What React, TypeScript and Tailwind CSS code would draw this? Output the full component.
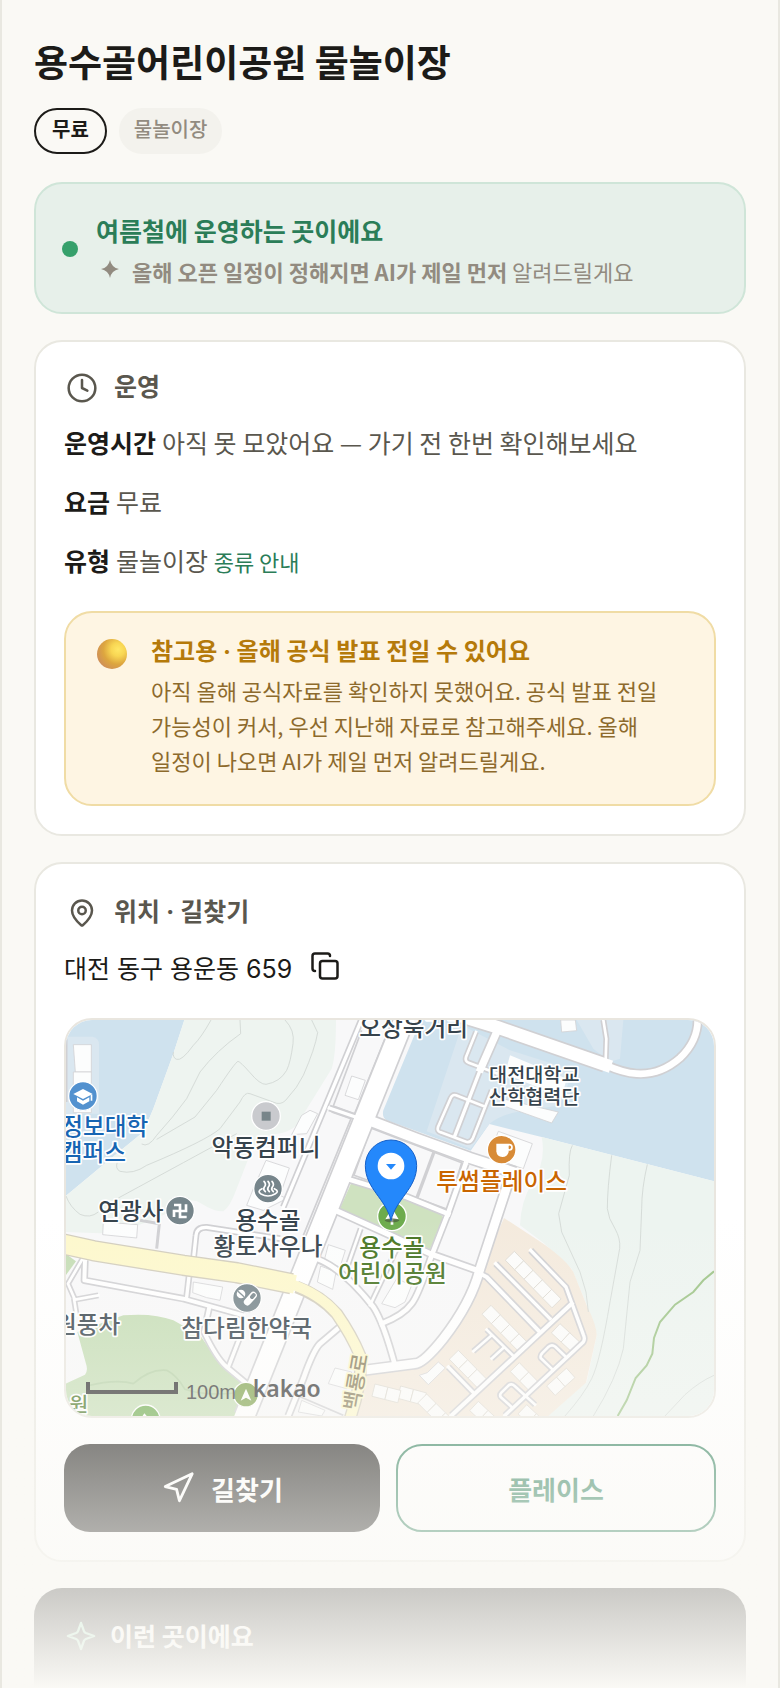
import type { ReactNode } from "react";
import { Clock, Copy, MapPin, Navigation } from "lucide-react";

const INK = "#36434c";

function Card({ children }: { children: ReactNode }) {
  return (
    <section className="rounded-[28px] border-2 border-[#e9e8e1] bg-white px-7 pt-6 pb-7">{children}</section>
  );
}

function CardHeading({ icon, children }: { icon: ReactNode; children: ReactNode }) {
  return (
    <h2 className="flex h-11 items-center gap-4 px-0.5 font-['Inter','Noto_Sans_CJK_KR',sans-serif] text-[25px] font-bold text-[#5a574e]">
      {icon}
      {children}
    </h2>
  );
}

function Sparkle({ className, filled = false }: { className: string; filled?: boolean }) {
  return (
    <svg
      viewBox="0 0 24 24"
      className={className}
      fill={filled ? "currentColor" : "none"}
      stroke="currentColor"
      strokeWidth={filled ? 0 : 1.8}
      strokeLinejoin="round"
      aria-hidden="true"
    >
      {filled ? (
        <path d="M12 0 Q14 10 24 12 Q14 14 12 24 Q10 14 0 12 Q10 10 12 0Z" />
      ) : (
        <path d="M12 1.5 L14.4 8.2 Q14.9 9.2 15.9 9.6 L22.5 12 L15.9 14.4 Q14.9 14.8 14.4 15.8 L12 22.5 L9.6 15.8 Q9.1 14.8 8.1 14.4 L1.5 12 L8.1 9.6 Q9.1 9.2 9.6 8.2Z" />
      )}
    </svg>
  );
}

const roads: { d: string; w: number }[] = [
  { d: "M1062 54 L584 1242", w: 58 },
  { d: "M934 54 L700 615", w: 10 },
  { d: "M838 318 L925 348", w: 10 },
  { d: "M950 352 L1100 410 L1260 468 L1395 512", w: 30 },
  { d: "M1220 38 L1340 75 L1665 188", w: 38 },
  { d: "M1665 188 Q1720 213 1760 215 Q1830 220 1890 168 Q1943 118 1943 54", w: 20 },
  { d: "M1660 54 L1669 110 L1667 175", w: 8 },
  { d: "M1338 95 L1292 200", w: 22 },
  { d: "M1292 200 L1215 400", w: 10 },
  { d: "M1278 90 L1248 165 Q1244 178 1256 182 L1340 214", w: 8 },
  { d: "M1300 312 L1218 280 Q1208 276 1202 288 L1164 375 Q1160 388 1172 391 L1250 420 Q1262 422 1268 410 L1325 265", w: 8 },
  { d: "M890 530 L1070 585 L1195 636", w: 14 },
  { d: "M845 620 L1000 690 L1140 755 L1290 808", w: 16 },
  { d: "M1247 485 L1195 632 L1145 760 Q1105 880 1085 905 Q1060 940 995 965", w: 14 },
  { d: "M1385 510 L1290 800 Q1265 900 1180 1010 Q1120 1085 1095 1085 L940 1105", w: 26 },
  { d: "M932 680 L890 800", w: 8 },
  { d: "M1050 720 L960 910", w: 8 },
  { d: "M800 770 Q880 800 970 915 Q1000 960 1035 1090", w: 14 },
  { d: "M875 970 L810 1025 Q790 1045 760 1130 L715 1242", w: 14 },
  { d: "M105 775 L103 835 L400 890 L580 940", w: 12 },
  { d: "M98 770 L54 845 L75 893 L145 880", w: 8 },
  { d: "M72 890 L80 940", w: 8 },
  { d: "M418 815 L410 885", w: 10 },
  { d: "M478 915 L462 990 Q500 1070 530 1095 L590 1145", w: 12 },
  { d: "M568 1010 L535 1095", w: 10 },
  { d: "M430 775 L438 700 Q440 675 470 676 L690 710", w: 10 },
  { d: "M1205 1240 L1565 905", w: 12 },
  { d: "M1365 1240 L1600 1020 Q1606 1010 1600 998 L1548 855 L1442 745", w: 10 },
  { d: "M1285 812 L1310 825 L1465 985", w: 12 },
  { d: "M1337 785 L1500 950", w: 10 },
  { d: "M1195 1095 L1270 1172", w: 10 },
  { d: "M1310 983 L1390 1062 M1325 1000 L1270 1048 M1325 1070 L1360 1038", w: 8 },
  { d: "M1505 1100 L1472 1068 Q1470 1060 1478 1052 L1496 1034 Q1506 1026 1516 1034 L1545 1062", w: 8 },
  { d: "M1385 1215 L1352 1185 Q1348 1178 1354 1172 L1376 1150 Q1385 1144 1394 1152 L1455 1208", w: 8 },
];

const homes = [
  { x: 1393, y: 748, n: 5, r: 45.5 },
  { x: 1323, y: 910, n: 4, r: 45.5 },
  { x: 1225, y: 1045, n: 3, r: 45.5 },
  { x: 1530, y: 965, n: 2, r: 43 },
  { x: 1408, y: 1082, n: 2, r: 45.5 },
  { x: 1490, y: 1152, n: 2, r: -42 },
  { x: 1285, y: 1198, n: 2, r: 43 },
  { x: 1430, y: 1208, n: 2, r: 43 },
  { x: 1052, y: 1152, n: 2, r: 15 },
  { x: 1130, y: 1176, n: 3, r: 45 },
  { x: 975, y: 1146, n: 2, r: 14 },
];

const labels = [
  { t: "오상욱거리", x: 1091, y: 102, s: 71, c: INK },
  { t: "대전대학교", x: 1453, y: 241, s: 59, c: INK },
  { t: "산학협력단", x: 1453, y: 307, s: 59, c: INK },
  { t: "투썸플레이스", x: 1355, y: 564, s: 71, c: "#c96500" },
  { t: "정보대학", x: 164, y: 400, s: 71, c: "#1765b3" },
  { t: "캠퍼스", x: 130, y: 478, s: 71, c: "#1765b3" },
  { t: "악동컴퍼니", x: 648, y: 462, s: 71, c: INK },
  { t: "연광사", x: 243, y: 654, s: 71, c: INK },
  { t: "용수골", x: 654, y: 680, s: 71, c: INK },
  { t: "황토사우나", x: 654, y: 758, s: 71, c: INK },
  { t: "용수골", x: 1026, y: 761, s: 71, c: "#477422" },
  { t: "어린이공원", x: 1027, y: 839, s: 71, c: "#477422" },
  { t: "참다림한약국", x: 590, y: 1006, s: 71, c: INK },
  { t: "원풍차", x: 113, y: 994, s: 71, c: INK },
  { t: "원", x: 86, y: 1230, s: 62, c: "#477422" },
];

function MapView() {
  return (
    <svg
      viewBox="48 54 1944 1188"
      preserveAspectRatio="xMidYMid slice"
      className="block h-[396px] w-full"
      role="img"
      aria-label="용수골어린이공원 지도"
    >
      <rect x="0" y="0" width="2100" height="1300" fill="#f8f8f9" />
      {/* campus and hills */}
      <path d="M40 54 H403 L370 155 L310 320 L280 390 L200 455 L40 588Z" fill="#cfe2ee" />
      <path d="M403 54 H858 Q858 160 845 200 L740 370 Q720 390 680 396 Q630 405 605 445 L560 560 Q540 615 520 628 Q490 628 455 605 Q420 580 380 620 Q240 690 150 694 L40 690 V588 L200 455 L280 390 L310 320 L370 155Z" fill="#eef4f0" />
      <path d="M40 104 H128 Q147 108 147 128 V335 H40Z" fill="#dae7f0" />
      <path d="M1112 54 H1992 V538 L1475 405 L1318 366 L1262 446 L1010 355 Q995 345 1000 325Z" fill="#cfe2ee" />
      <path d="M1236 70 L1380 145 L1570 205 L1530 310 L1400 330 Q1350 340 1318 366 L1262 440 L1130 388Z" fill="#dae7f0" />
      <path d="M1580 54 H1720 L1710 170 L1680 180 L1630 140Z" fill="#dae7f0" />
      <path d="M1475 405 L1992 538 V1242 H1490 L1610 1140 L1640 1000 L1615 920 L1565 800 L1480 722 L1410 670 Q1412 600 1445 545 Q1490 480 1475 405Z" fill="#edf4f0" />
      <path d="M1362 648 L1480 725 Q1550 775 1570 810 L1610 910 Q1640 970 1640 1000 L1608 1142 L1495 1242 H890 L940 1105 L1110 1085 L1260 880Z" fill="#f4eadd" />
      <path d="M905 540 L1080 595 L1170 635 Q1184 645 1180 660 L1140 742 L865 630Z" fill="#cfe2c0" />
      <path d="M40 1148 L105 1118 Q115 1105 108 1085 L82 990 L220 940 Q310 932 370 955 L450 1000 L515 1092 L585 1145 L560 1242 H40Z" fill="#c5ddb5" />
      <path d="M40 750 L78 778 L40 830Z" fill="#c5ddb5" />
      {/* contour lines */}
      <g fill="none" stroke="#d0d6d2" strokeWidth="2.5">
        <path d="M483 54 Q455 105 430 130 Q395 178 380 172 Q368 168 370 150" />
        <path d="M570 54 L572 95 Q500 145 450 210 L410 290 Q370 345 320 400 Q295 438 275 426" />
        <path d="M705 54 Q735 85 729 125 Q722 180 710 205 Q690 240 648 247 Q630 248 600 212 Q572 180 564 178 Q556 180 500 265 L435 345 L320 412" />
        <path d="M785 54 L803 92 Q795 140 760 220 Q740 260 715 285 Q700 308 680 304 L600 275 Q585 268 570 300 L510 380 Q470 415 290 490 Q250 518 210 508 Q195 500 202 480" />
        <path d="M560 395 L400 482 L205 588" />
        <path d="M48 582 Q60 615 90 637 Q120 650 145 630" />
        <path d="M1567 430 Q1555 450 1558 520 L1526 635 L1535 690 L1590 810 L1608 870 L1615 930" />
        <path d="M1685 460 Q1672 560 1672 620 Q1675 650 1695 680 Q1712 710 1709 740 L1680 900 Q1650 1080 1625 1130 Q1600 1180 1545 1242" />
        <path d="M1792 487 Q1775 560 1775 620 L1770 745 L1740 840 L1720 1040 Q1700 1130 1630 1242" />
        <path d="M1992 1120 Q1950 1138 1905 1178 L1845 1242" />
      </g>
      <path d="M110 1152 Q200 1130 250 1145 Q300 1100 350 1105 Q380 1120 405 1162 Q470 1185 580 1170" fill="none" stroke="#b5d0a6" strokeWidth="5" />
      <path d="M1992 808 L1960 835 L1930 870 L1875 908 L1830 960 L1812 1008 L1807 1055 L1790 1090 L1757 1128 L1730 1195 L1703 1242" fill="none" stroke="#9cc386" strokeWidth="6" />
      {/* blocks and buildings */}
      <g fill="none" stroke="#d0d0d3" strokeWidth="5" strokeLinejoin="round">
        <path d="M935 85 L850 312 L914 335 L1005 110" />
        <path d="M845 330 L903 350 L760 700" />
        <path d="M962 378 L1235 482 L1192 622 L912 520Z" />
        <path d="M1152 450 L1100 590" strokeWidth="10" />
        <path d="M50 112 V300" />
        <path d="M270 655 L328 665 L320 740" strokeWidth="9" />
        <path d="M740 1180 L880 1240" />
      </g>
      <g fill="#fcfdfd" stroke="#d3d3d5" strokeWidth="2.5">
        <path d="M70 128 H124 V210 H76Z" />
        <path d="M70 210 H124 V332 H70Z" />
        <path d="M905 222 L946 235 L925 293 L885 280Z" />
        <path d="M780 325 L803 335 L770 395 L725 398 L755 340Z" />
        <path d="M648 475 L718 498 L690 580 L610 560Z" />
        <path d="M610 560 L590 610 L640 625 L710 590 L680 575Z" />
        <path d="M160 660 L263 668 L260 708 L158 698Z" />
        <path d="M430 840 L518 855 L510 895 Q470 890 428 872Z" />
        <path d="M835 728 L886 745 L870 795 L822 778Z" />
        <path d="M812 792 L858 810 L848 862 L802 840Z" />
        <path d="M1040 830 L1085 850 L1065 900 L1035 917 L995 905Z" />
        <path d="M855 1098 L905 1110 L890 1160 L835 1145Z" />
        <path d="M755 1195 L825 1225 L815 1242 L745 1230Z" />
        <path d="M1380 160 L1550 230 L1535 285 L1365 215Z" stroke="none" />
        <path d="M1365 292 L1525 330 L1505 363 L1362 312Z" />
        <path d="M1532 54 H1576 L1580 86 L1535 90Z" />
        <path d="M1345 388 L1447 425 L1420 500 L1315 465Z" />
        <path d="M1108 1120 L1132 1112 L1165 1080 L1186 1098 L1135 1148Z" />
      </g>
      {homes.map((h) => (
        <g key={`${h.x}-${h.y}`} transform={`translate(${h.x} ${h.y}) rotate(${h.r})`} fill="#fcfcfb" stroke="#dcd8d0" strokeWidth="2.5">
          {Array.from({ length: h.n }, (_, i) => (
            <rect key={i} x={i * 40} width="40" height="38" />
          ))}
        </g>
      ))}
      {/* streets */}
      <g fill="none" stroke="#d0d0d3" strokeLinejoin="round">
        {roads.map((r) => (
          <path key={r.d} d={r.d} strokeWidth={r.w + 10} />
        ))}
      </g>
      <g fill="none" stroke="#ffffff" strokeLinejoin="round">
        {roads.map((r) => (
          <path key={r.d} d={r.d} strokeWidth={r.w} strokeLinecap="square" />
        ))}
      </g>
      <g fill="none" strokeLinejoin="round">
        <path d="M30 724 L130 746 L400 790 L560 812 L725 845" stroke="#d2cdbd" strokeWidth="64" />
        <path d="M740 855 Q810 880 860 935 Q905 1000 930 1060 Q940 1130 900 1250" stroke="#d2cdbd" strokeWidth="38" />
        <path d="M30 724 L130 746 L400 790 L560 812 L735 847" stroke="#fdf8cc" strokeWidth="56" />
        <path d="M720 845 Q810 875 860 935 Q905 1000 930 1060 Q940 1130 900 1250" stroke="#fdf8cc" strokeWidth="30" />
      </g>
      {/* place markers */}
      <g stroke="#ffffff" strokeWidth="4">
        <circle cx="99" cy="282" r="43" fill="#5291cf" />
        <circle cx="648" cy="342" r="43" fill="#c9cace" />
        <circle cx="654" cy="560" r="43" fill="#76858b" />
        <circle cx="390" cy="626" r="43" fill="#76858b" />
        <circle cx="1355" cy="443" r="43" fill="#d88b37" />
        <circle cx="1026" cy="643" r="43" fill="#6dab4d" />
        <circle cx="591" cy="888" r="43" fill="#76858b" />
        <circle cx="588" cy="1178" r="37" fill="#7fa24d" />
        <circle cx="287" cy="1252" r="43" fill="#6dab4d" />
      </g>
      <g fill="#ffffff">
        <path d="M99 261 L128 276 L99 291 L70 276Z" />
        <path d="M81 286 L99 296 L118 286 V298 L99 308 L81 298Z" />
        <path d="M122 278 H127 V296 H122Z" />
        <path d="M1339 425 H1376 V450 Q1372 465 1357 465 Q1341 465 1339 448Z" />
        <path d="M1026 618 L1046 652 H1030 V668 H1022 V652 H1006Z" />
        <path d="M588 1160 L604 1196 L588 1187 L572 1196Z" />
        <path d="M283 1234 L294 1246 H275Z" />
        <circle cx="573" cy="876" r="13" />
      </g>
      <path d="M564 868 L582 884" stroke="#76858b" strokeWidth="4" />
      <path d="M592 900 L610 880" stroke="#ffffff" strokeWidth="21" strokeLinecap="round" />
      <path d="M606 885 L611 879" stroke="#76858b" strokeWidth="12" strokeLinecap="round" />
      <circle cx="1378" cy="436" r="8" fill="none" stroke="#ffffff" strokeWidth="5" />
      <rect x="635" y="329" width="27" height="27" fill="#78858a" />
      <g fill="none" stroke="#ffffff" strokeWidth="5" strokeLinecap="round">
        <path d="M642 538 Q650 547 643 555 Q638 562 646 569 M654 538 Q662 547 655 555 Q650 562 658 569 M666 538 Q674 547 667 555 Q662 562 670 569" />
        <path d="M636 560 Q620 568 633 576 Q654 588 675 576 Q690 568 673 560" />
      </g>
      <path d="M372 609 H390 V645 H410 M372 645 V627 H408 V607" fill="none" stroke="#ffffff" strokeWidth="8" />
      {/* place names */}
      <g
        textAnchor="middle"
        fontWeight="500"
        stroke="#ffffff"
        strokeWidth="10"
        strokeLinejoin="round"
        paintOrder="stroke"
      >
        {labels.map((l) => (
          <text key={`${l.t}-${l.y}`} x={l.x} y={l.y} fontSize={l.s} fill={l.c}>
            {l.t}
          </text>
        ))}
        <text x="920" y="1140" dy="20" fontSize="62" fill="#857a58" stroke="#fdf8cc" transform="rotate(-80 920 1140)">
          백룡로
        </text>
      </g>
      {/* selected place */}
      <ellipse cx="1026" cy="655" rx="22" ry="6" fill="#44503c" opacity=".6" />
      <path d="M1023 656 C1008 590 946 560 946 491 A77 77 0 0 1 1100 491 C1100 560 1038 590 1023 656Z" fill="#2488fb" stroke="#1560c8" strokeWidth="3" />
      <circle cx="1023" cy="492" r="40" fill="#ffffff" />
      <path d="M1008 486 H1038 L1023 503Z" fill="#2488fb" />
      {/* scale */}
      <path d="M114 1140 V1170 H378 V1140" fill="none" stroke="#2c2c2c" strokeWidth="12" />
      <text x="408" y="1192" fontSize="60" fill="#333333" className="font-['Liberation_Sans',sans-serif]">100m</text>
      <text x="608" y="1184" fontSize="69" fontWeight="600" fill="#333333" className="font-['Noto_Sans',sans-serif]">kakao</text>
    </svg>
  );
}

export default function App() {
  return (
    <main className="relative h-screen overflow-hidden border-x-2 border-[#e9e8e1] bg-[#faf9f5] px-8 pt-9 font-['Noto_Sans_CJK_KR',sans-serif] text-[#1c1b18]">
      <h1 className="text-[37px] leading-[50px] font-bold">용수골어린이공원 물놀이장</h1>
      <div className="mt-[22px] flex gap-3 text-xl leading-[38px] font-medium">
        <span className="rounded-full border-2 border-[#1c1b18] px-4 pb-1 font-bold">무료</span>
        <span className="rounded-full border-2 border-[#f3f2ed] bg-[#f3f2ed] px-[13px] pb-1 text-[#928b80]">물놀이장</span>
      </div>

      <section className="mt-7 flex items-center gap-[18px] rounded-[28px] border-2 border-[#cfe5d8] bg-[#e7f0ea] px-[26px] pt-[26px] pb-6">
        <span className="size-4 shrink-0 rounded-full bg-[#36a06b]" />
        <div>
          <p className="text-[25px] leading-10 font-bold text-[#2b7d58]">여름철에 운영하는 곳이에요</p>
          <p className="mt-1 flex items-center gap-[13px] pl-[5px] text-[22px] leading-[34px] text-[#928b80]">
            <Sparkle filled className="mb-1 size-[18px]" />
            <span>
              <b>올해 오픈 일정이 정해지면 AI가 제일 먼저</b> 알려드릴게요
            </span>
          </p>
        </div>
      </section>

      <div className="mt-[26px] flex flex-col gap-[26px]">
        <Card>
          <CardHeading icon={<Clock size={32} strokeWidth={1.9} />}>운영</CardHeading>
          <dl className="mt-3 flex flex-col gap-[19px] text-[25px] leading-10 text-[#5a574e]">
            <div className="flex gap-1.5">
              <dt className="font-bold text-[#1c1b18]">운영시간</dt>
              <dd>아직 못 모았어요 — 가기 전 한번 확인해보세요</dd>
            </div>
            <div className="flex gap-1.5">
              <dt className="font-bold text-[#1c1b18]">요금</dt>
              <dd>무료</dd>
            </div>
            <div className="flex gap-1.5">
              <dt className="font-bold text-[#1c1b18]">유형</dt>
              <dd>
                물놀이장{" "}
                <a href="#types" className="text-[22px] text-[#2b7d58]">
                  종류 안내
                </a>
              </dd>
            </div>
          </dl>
          <aside className="mt-[30px] flex gap-6 rounded-[28px] border-2 border-[#f0dca5] bg-[#fef5e3] px-[31px] pt-5 pb-[26px]">
            <svg viewBox="0 0 30 30" className="mt-1.5 size-[30px] shrink-0" aria-hidden="true">
              <defs>
                <radialGradient id="orb" cx=".7" cy=".35" r=".75">
                  <stop offset="0" stopColor="#ffe766" />
                  <stop offset=".3" stopColor="#f8d653" />
                  <stop offset=".65" stopColor="#dda63f" />
                  <stop offset="1" stopColor="#cf8f58" />
                </radialGradient>
              </defs>
              <circle cx="15" cy="15" r="15" fill="url(#orb)" />
            </svg>
            <div>
              <h3 className="font-['Inter','Noto_Sans_CJK_KR',sans-serif] text-2xl leading-[38px] font-bold text-[#b57a0a]">
                참고용 · 올해 공식 발표 전일 수 있어요
              </h3>
              <p className="mt-0.5 text-[22px] leading-[35px] break-keep text-[#8d6a2c]">
                아직 올해 공식자료를 확인하지 못했어요. 공식 발표 전일 가능성이 커서, 우선 지난해 자료로 참고해주세요. 올해
                일정이 나오면 AI가 제일 먼저 알려드릴게요.
              </p>
            </div>
          </aside>
        </Card>

        <Card>
          <div className="py-[3px]">
            <CardHeading icon={<MapPin size={32} strokeWidth={2} className="p-px" />}>위치 · 길찾기</CardHeading>
          </div>
          <div className="mt-3 flex h-10 items-center gap-[18px]">
            <address className="font-['Inter','Noto_Sans_CJK_KR',sans-serif] text-[25px] not-italic">대전 동구 용운동 659</address>
            <button type="button" aria-label="주소 복사" className="pb-2">
              <Copy size={30} strokeWidth={2} />
            </button>
          </div>
          <div className="mt-7 overflow-hidden rounded-[28px] border-2 border-[#e9e6df]">
            <MapView />
          </div>
          <div className="mt-[26px] flex gap-4 text-[26px] font-bold">
            <button type="button" className="flex h-22 flex-1 items-center justify-center gap-4 rounded-[26px] bg-[#1c1b18] px-4 text-white">
              <Navigation size={34} strokeWidth={2} />
              길찾기
            </button>
            <button type="button" className="flex h-22 flex-1 items-center justify-center rounded-[26px] border-2 border-[#2b7d58] bg-white px-4 text-[#2b7d58]">
              플레이스
            </button>
          </div>
        </Card>

        <section className="rounded-[28px] bg-[#1c1b18] px-8 pt-[26px] pb-20">
          <h2 className="flex h-11 items-center gap-3.5 text-[25px] font-bold text-white">
            <Sparkle className="size-[30px] text-[#8fe0b5]" />
            이런 곳이에요
          </h2>
        </section>
      </div>

      <div className="pointer-events-none absolute inset-x-0 bottom-0 h-[470px] bg-linear-to-b from-[#faf9f5]/0 to-[#faf9f5]" />
    </main>
  );
}
